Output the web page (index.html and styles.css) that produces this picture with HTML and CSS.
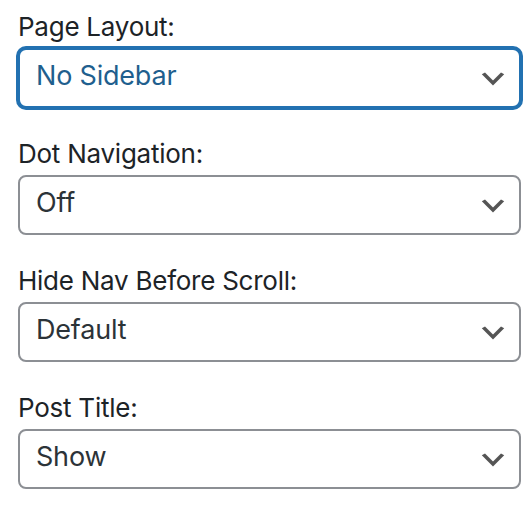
FILE: index.html
```html
<!DOCTYPE html>
<html lang="en">
<head>
<meta charset="utf-8">
<title>Page settings</title>
<link rel="stylesheet" href="styles.css">
</head>
<body>
<div class="panel">
  <div class="field">
    <div class="label">Page Layout:</div>
    <div class="select is-focused">
      <span class="value">No Sidebar</span>
      <svg class="chev" viewBox="0 0 20 20" width="32" height="32"><path d="M5 6l5 5 5-5 2 1-7 7-7-7 2-1z"/></svg>
    </div>
  </div>
  <div class="field">
    <div class="label">Dot Navigation:</div>
    <div class="select">
      <span class="value">Off</span>
      <svg class="chev" viewBox="0 0 20 20" width="32" height="32"><path d="M5 6l5 5 5-5 2 1-7 7-7-7 2-1z"/></svg>
    </div>
  </div>
  <div class="field">
    <div class="label">Hide Nav Before Scroll:</div>
    <div class="select">
      <span class="value">Default</span>
      <svg class="chev" viewBox="0 0 20 20" width="32" height="32"><path d="M5 6l5 5 5-5 2 1-7 7-7-7 2-1z"/></svg>
    </div>
  </div>
  <div class="field">
    <div class="label">Post Title:</div>
    <div class="select">
      <span class="value">Show</span>
      <svg class="chev" viewBox="0 0 20 20" width="32" height="32"><path d="M5 6l5 5 5-5 2 1-7 7-7-7 2-1z"/></svg>
    </div>
  </div>
</div>
</body>
</html>
```

FILE: styles.css
```css
html, body {
  margin: 0;
  padding: 0;
  background: #ffffff;
}

body {
  font-family: Inter, "Liberation Sans", sans-serif;
  color: #1d2327;
}

.panel {
  display: flex;
  flex-direction: column;
  gap: 31px;
  width: 503px;
  padding: 12px 0 0 18px;
}

.field {
  display: flex;
  flex-direction: column;
  gap: 6px;
}

.label {
  font-size: 26px;
  line-height: 30px;
  letter-spacing: -0.25px;
  color: #1d2327;
}

.select {
  box-sizing: border-box;
  height: 60px;
  display: flex;
  align-items: flex-start;
  justify-content: space-between;
  border: 2px solid #8c8f94;
  border-radius: 8px;
  background: #ffffff;
  padding: 9px 10px 0 16px;
  color: #2c3338;
}

.value {
  font-size: 27px;
  line-height: 34px;
  letter-spacing: -0.2px;
}

.chev {
  fill: #555555;
  margin-top: 4px;
}

.select.is-focused {
  border-color: #2271b1;
  box-shadow: 0 0 0 2px #2271b1;
  color: #1f5f8e;
}
```
